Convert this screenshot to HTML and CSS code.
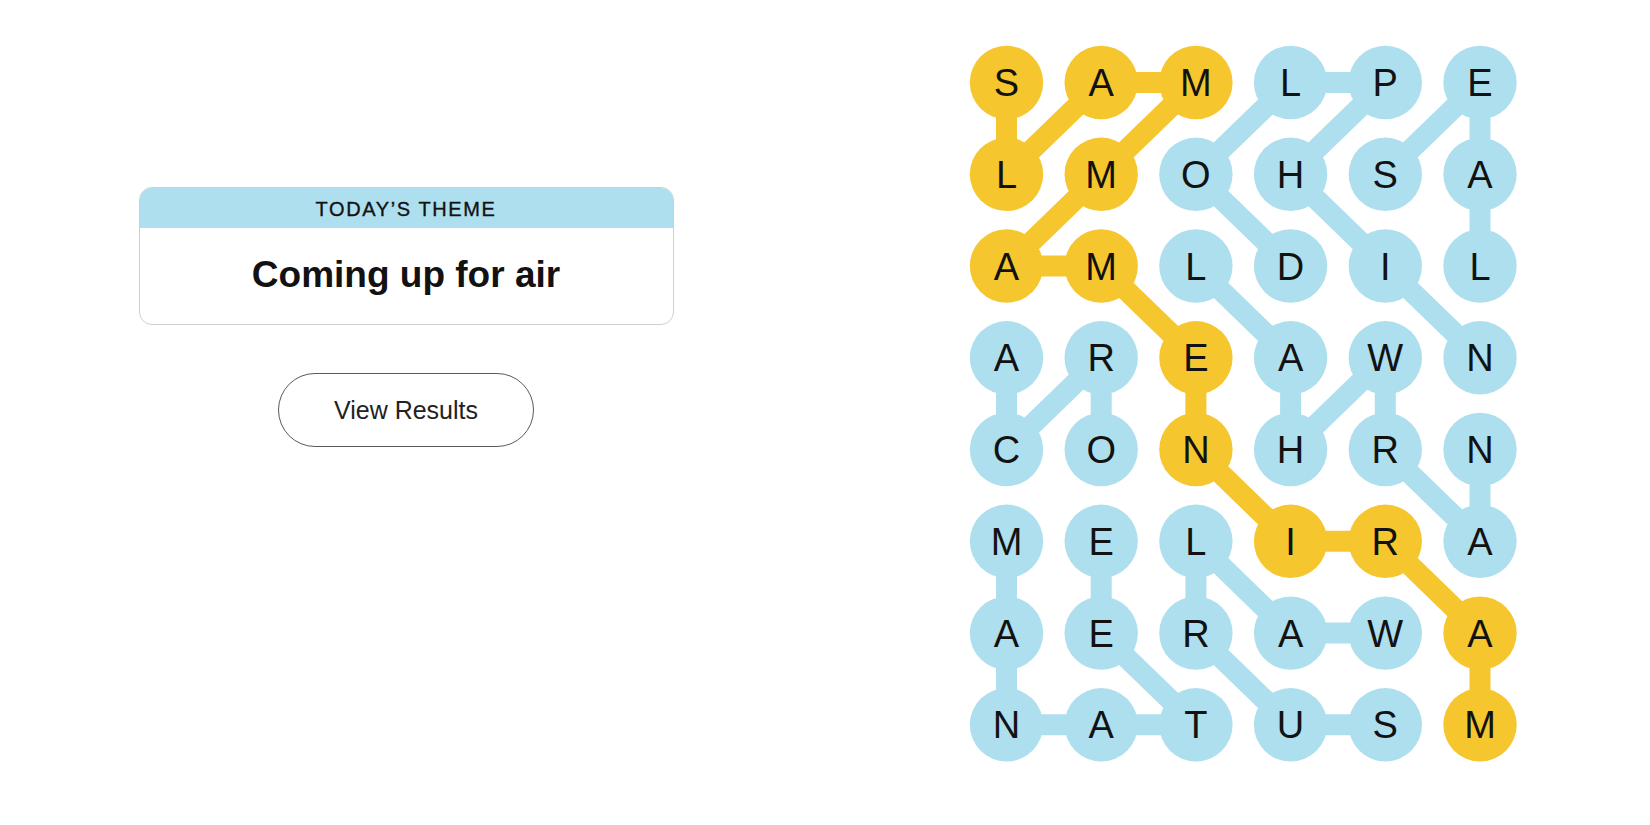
FILE: index.html
```html
<!DOCTYPE html>
<html lang="en">
<head>
<meta charset="utf-8">
<title>Strands</title>
<link rel="stylesheet" href="styles.css">
</head>
<body>
<main class="page">
  <section class="left">
    <div class="theme-card">
      <div class="theme-head">TODAY’S THEME</div>
      <div class="theme-body">Coming up for air</div>
    </div>
    <button class="results-btn" type="button">View Results</button>
  </section>
  <section class="right">
    <svg class="board" width="547" height="716" viewBox="0 0 547 716" xmlns="http://www.w3.org/2000/svg">
      <g class="links">
        <polyline class="link-y" points="36.5,36.5 36.5,128.3 131.2,36.5 225.9,36.5 131.2,128.3 36.5,220 131.2,220 225.9,311.8 225.9,403.5 320.6,495.3 415.3,495.3 510,587.1 510,678.8"/>
        <polyline class="link-b" points="320.6,220 225.9,128.3 320.6,36.5 415.3,36.5 320.6,128.3 415.3,220 510,311.8"/>
        <polyline class="link-b" points="415.3,128.3 510,36.5 510,128.3 510,220"/>
        <polyline class="link-b" points="131.2,403.5 131.2,311.8 36.5,403.5 36.5,311.8"/>
        <polyline class="link-b" points="510,403.5 510,495.3 415.3,403.5 415.3,311.8 320.6,403.5 320.6,311.8 225.9,220"/>
        <polyline class="link-b" points="415.3,587.1 320.6,587.1 225.9,495.3 225.9,587.1 320.6,678.8 415.3,678.8"/>
        <polyline class="link-b" points="36.5,495.3 36.5,587.1 36.5,678.8 131.2,678.8 225.9,678.8 131.2,587.1 131.2,495.3"/>
      </g>
      <g class="cells">
        <circle class="dot-y" cx="36.5" cy="36.5" r="36.7"/><text x="36.5" y="50">S</text>
        <circle class="dot-y" cx="131.2" cy="36.5" r="36.7"/><text x="131.2" y="50">A</text>
        <circle class="dot-y" cx="225.9" cy="36.5" r="36.7"/><text x="225.9" y="50">M</text>
        <circle class="dot-b" cx="320.6" cy="36.5" r="36.7"/><text x="320.6" y="50">L</text>
        <circle class="dot-b" cx="415.3" cy="36.5" r="36.7"/><text x="415.3" y="50">P</text>
        <circle class="dot-b" cx="510" cy="36.5" r="36.7"/><text x="510" y="50">E</text>

        <circle class="dot-y" cx="36.5" cy="128.3" r="36.7"/><text x="36.5" y="141.8">L</text>
        <circle class="dot-y" cx="131.2" cy="128.3" r="36.7"/><text x="131.2" y="141.8">M</text>
        <circle class="dot-b" cx="225.9" cy="128.3" r="36.7"/><text x="225.9" y="141.8">O</text>
        <circle class="dot-b" cx="320.6" cy="128.3" r="36.7"/><text x="320.6" y="141.8">H</text>
        <circle class="dot-b" cx="415.3" cy="128.3" r="36.7"/><text x="415.3" y="141.8">S</text>
        <circle class="dot-b" cx="510" cy="128.3" r="36.7"/><text x="510" y="141.8">A</text>

        <circle class="dot-y" cx="36.5" cy="220" r="36.7"/><text x="36.5" y="233.5">A</text>
        <circle class="dot-y" cx="131.2" cy="220" r="36.7"/><text x="131.2" y="233.5">M</text>
        <circle class="dot-b" cx="225.9" cy="220" r="36.7"/><text x="225.9" y="233.5">L</text>
        <circle class="dot-b" cx="320.6" cy="220" r="36.7"/><text x="320.6" y="233.5">D</text>
        <circle class="dot-b" cx="415.3" cy="220" r="36.7"/><text x="415.3" y="233.5">I</text>
        <circle class="dot-b" cx="510" cy="220" r="36.7"/><text x="510" y="233.5">L</text>

        <circle class="dot-b" cx="36.5" cy="311.8" r="36.7"/><text x="36.5" y="325.3">A</text>
        <circle class="dot-b" cx="131.2" cy="311.8" r="36.7"/><text x="131.2" y="325.3">R</text>
        <circle class="dot-y" cx="225.9" cy="311.8" r="36.7"/><text x="225.9" y="325.3">E</text>
        <circle class="dot-b" cx="320.6" cy="311.8" r="36.7"/><text x="320.6" y="325.3">A</text>
        <circle class="dot-b" cx="415.3" cy="311.8" r="36.7"/><text x="415.3" y="325.3">W</text>
        <circle class="dot-b" cx="510" cy="311.8" r="36.7"/><text x="510" y="325.3">N</text>

        <circle class="dot-b" cx="36.5" cy="403.5" r="36.7"/><text x="36.5" y="417">C</text>
        <circle class="dot-b" cx="131.2" cy="403.5" r="36.7"/><text x="131.2" y="417">O</text>
        <circle class="dot-y" cx="225.9" cy="403.5" r="36.7"/><text x="225.9" y="417">N</text>
        <circle class="dot-b" cx="320.6" cy="403.5" r="36.7"/><text x="320.6" y="417">H</text>
        <circle class="dot-b" cx="415.3" cy="403.5" r="36.7"/><text x="415.3" y="417">R</text>
        <circle class="dot-b" cx="510" cy="403.5" r="36.7"/><text x="510" y="417">N</text>

        <circle class="dot-b" cx="36.5" cy="495.3" r="36.7"/><text x="36.5" y="508.8">M</text>
        <circle class="dot-b" cx="131.2" cy="495.3" r="36.7"/><text x="131.2" y="508.8">E</text>
        <circle class="dot-b" cx="225.9" cy="495.3" r="36.7"/><text x="225.9" y="508.8">L</text>
        <circle class="dot-y" cx="320.6" cy="495.3" r="36.7"/><text x="320.6" y="508.8">I</text>
        <circle class="dot-y" cx="415.3" cy="495.3" r="36.7"/><text x="415.3" y="508.8">R</text>
        <circle class="dot-b" cx="510" cy="495.3" r="36.7"/><text x="510" y="508.8">A</text>

        <circle class="dot-b" cx="36.5" cy="587.1" r="36.7"/><text x="36.5" y="600.6">A</text>
        <circle class="dot-b" cx="131.2" cy="587.1" r="36.7"/><text x="131.2" y="600.6">E</text>
        <circle class="dot-b" cx="225.9" cy="587.1" r="36.7"/><text x="225.9" y="600.6">R</text>
        <circle class="dot-b" cx="320.6" cy="587.1" r="36.7"/><text x="320.6" y="600.6">A</text>
        <circle class="dot-b" cx="415.3" cy="587.1" r="36.7"/><text x="415.3" y="600.6">W</text>
        <circle class="dot-y" cx="510" cy="587.1" r="36.7"/><text x="510" y="600.6">A</text>

        <circle class="dot-b" cx="36.5" cy="678.8" r="36.7"/><text x="36.5" y="692.3">N</text>
        <circle class="dot-b" cx="131.2" cy="678.8" r="36.7"/><text x="131.2" y="692.3">A</text>
        <circle class="dot-b" cx="225.9" cy="678.8" r="36.7"/><text x="225.9" y="692.3">T</text>
        <circle class="dot-b" cx="320.6" cy="678.8" r="36.7"/><text x="320.6" y="692.3">U</text>
        <circle class="dot-b" cx="415.3" cy="678.8" r="36.7"/><text x="415.3" y="692.3">S</text>
        <circle class="dot-y" cx="510" cy="678.8" r="36.7"/><text x="510" y="692.3">M</text>
      </g>
    </svg>
  </section>
</main>
</body>
</html>
```

FILE: styles.css
```css
html, body {
  margin: 0;
  padding: 0;
  background: #ffffff;
}

body {
  font-family: "Liberation Sans", Arial, sans-serif;
  color: #121212;
}

.page {
  display: flex;
  align-items: flex-start;
  width: 1650px;
  height: 825px;
}

.left {
  width: 812px;
  display: flex;
  flex-direction: column;
  align-items: center;
  padding-top: 187px;
}

.theme-card {
  width: 535px;
  box-sizing: border-box;
  border: 1px solid #cfcfcf;
  border-radius: 13px;
  overflow: hidden;
  background: #fff;
}

.theme-head {
  height: 39px;
  background: #aedfee;
  display: flex;
  align-items: center;
  justify-content: center;
  font-size: 20px;
  letter-spacing: 1.6px;
  color: #121212;
  -webkit-text-stroke: 0.35px #121212;
  margin-top: -1px;
  padding-top: 4px;
  box-sizing: border-box;
  height: 41px;
}

.theme-body {
  height: 96px;
  display: flex;
  align-items: center;
  justify-content: center;
  font-size: 37px;
  font-weight: 700;
  color: #121212;
  padding-bottom: 2px;
  box-sizing: border-box;
}

.results-btn {
  margin-top: 48px;
  width: 256px;
  height: 74px;
  box-sizing: border-box;
  border: 1.5px solid #5a5a5a;
  border-radius: 37px;
  background: #fff;
  font-family: "Liberation Sans", Arial, sans-serif;
  font-size: 25px;
  color: #222;
  padding: 0;
  cursor: pointer;
}

.right {
  padding-top: 46px;
  padding-left: 157.5px;
}

.board {
  display: block;
  overflow: visible;
}

.link-y, .link-b {
  fill: none;
  stroke-width: 21;
  stroke-linejoin: round;
}

.link-y { stroke: #f6c62e; }
.link-b { stroke: #aedfee; }

.dot-y { fill: #f6c62e; }
.dot-b { fill: #aedfee; }

.cells text {
  font-family: "Liberation Sans", Arial, sans-serif;
  font-size: 38px;
  fill: #121212;
  text-anchor: middle;
}
```
